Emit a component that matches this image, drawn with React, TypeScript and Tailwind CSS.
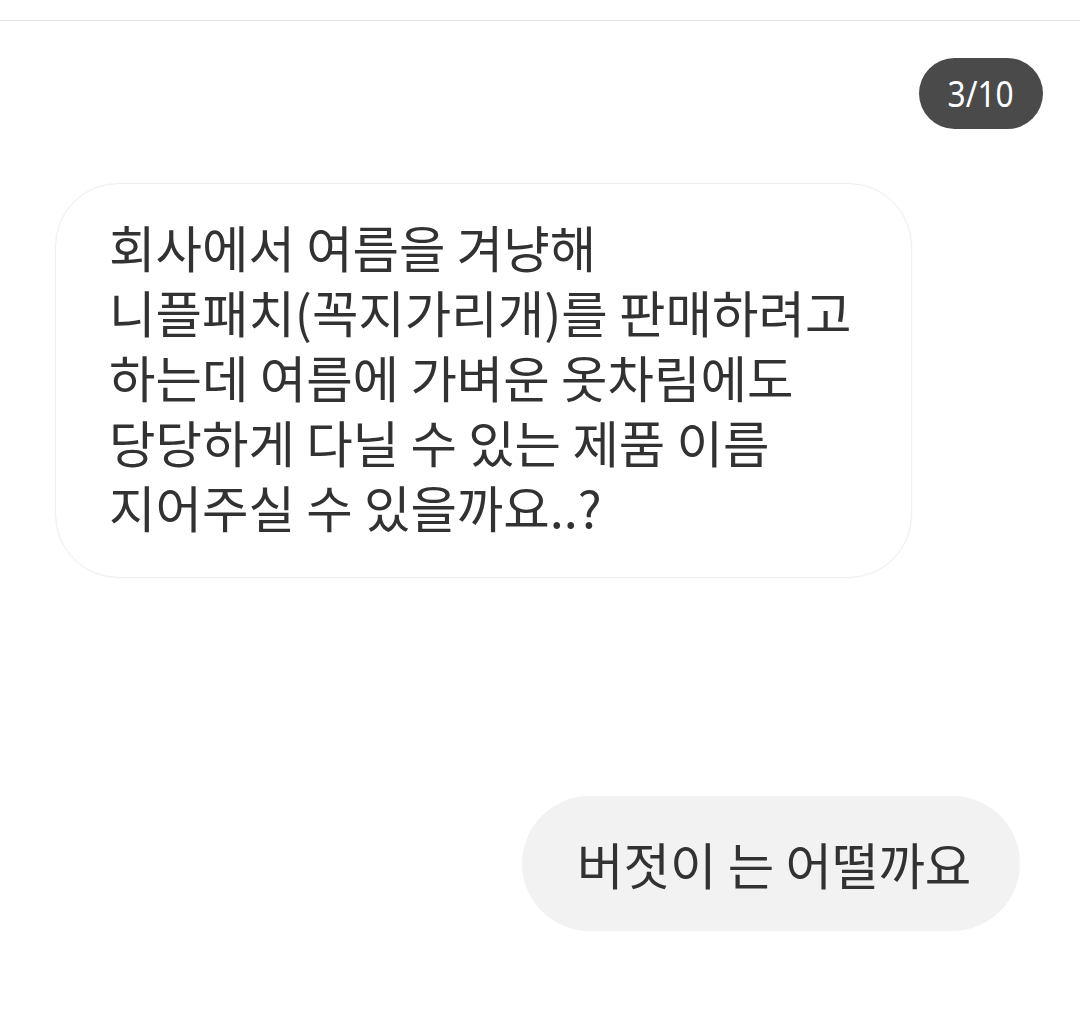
const KR = "font-['Noto_Sans_CJK_KR','Noto_Sans',sans-serif]";

const QUESTION = `회사에서 여름을 겨냥해
니플패치(꼭지가리개)를 판매하려고
하는데 여름에 가벼운 옷차림에도
당당하게 다닐 수 있는 제품 이름
지어주실 수 있을까요..?`;

export default function App() {
	return (
		<div className="min-h-[1025px] w-[1080px] bg-white">
			<div className="h-5" />
			<div className="h-px bg-[#e2e2e2]" />

			{/* page counter */}
			<div className="flex justify-end pr-[37px] pt-[37px]">
				<div className="flex h-[71px] w-[124px] items-center justify-center rounded-full bg-[#4a4a4a]">
					<span className="inline-block scale-x-[0.88] font-['Noto_Sans',sans-serif] text-[36px] leading-none text-white">
						3/10
					</span>
				</div>
			</div>

			{/* incoming message */}
			<div className="pl-[55px] pt-[54px]">
				<div className="w-[857px] rounded-[64px] border border-[#efefef] bg-white pb-[38px] pl-[53px] pt-[30px] shadow-[0_0_3px_rgba(0,0,0,0.03)]">
					<p className={`${KR} whitespace-pre-line text-[50.5px] leading-[65px] text-[#323232]`}>{QUESTION}</p>
				</div>
			</div>

			{/* reply */}
			<div className="flex justify-end pr-[60px] pt-[218px]">
				<div className="flex h-[135px] w-[498px] items-center rounded-full bg-[#f2f2f2] pl-[55px]">
					<span className={`${KR} text-[50.5px] leading-[65px] text-[#323232]`}>버젓이 는 어떨까요</span>
				</div>
			</div>
		</div>
	);
}
